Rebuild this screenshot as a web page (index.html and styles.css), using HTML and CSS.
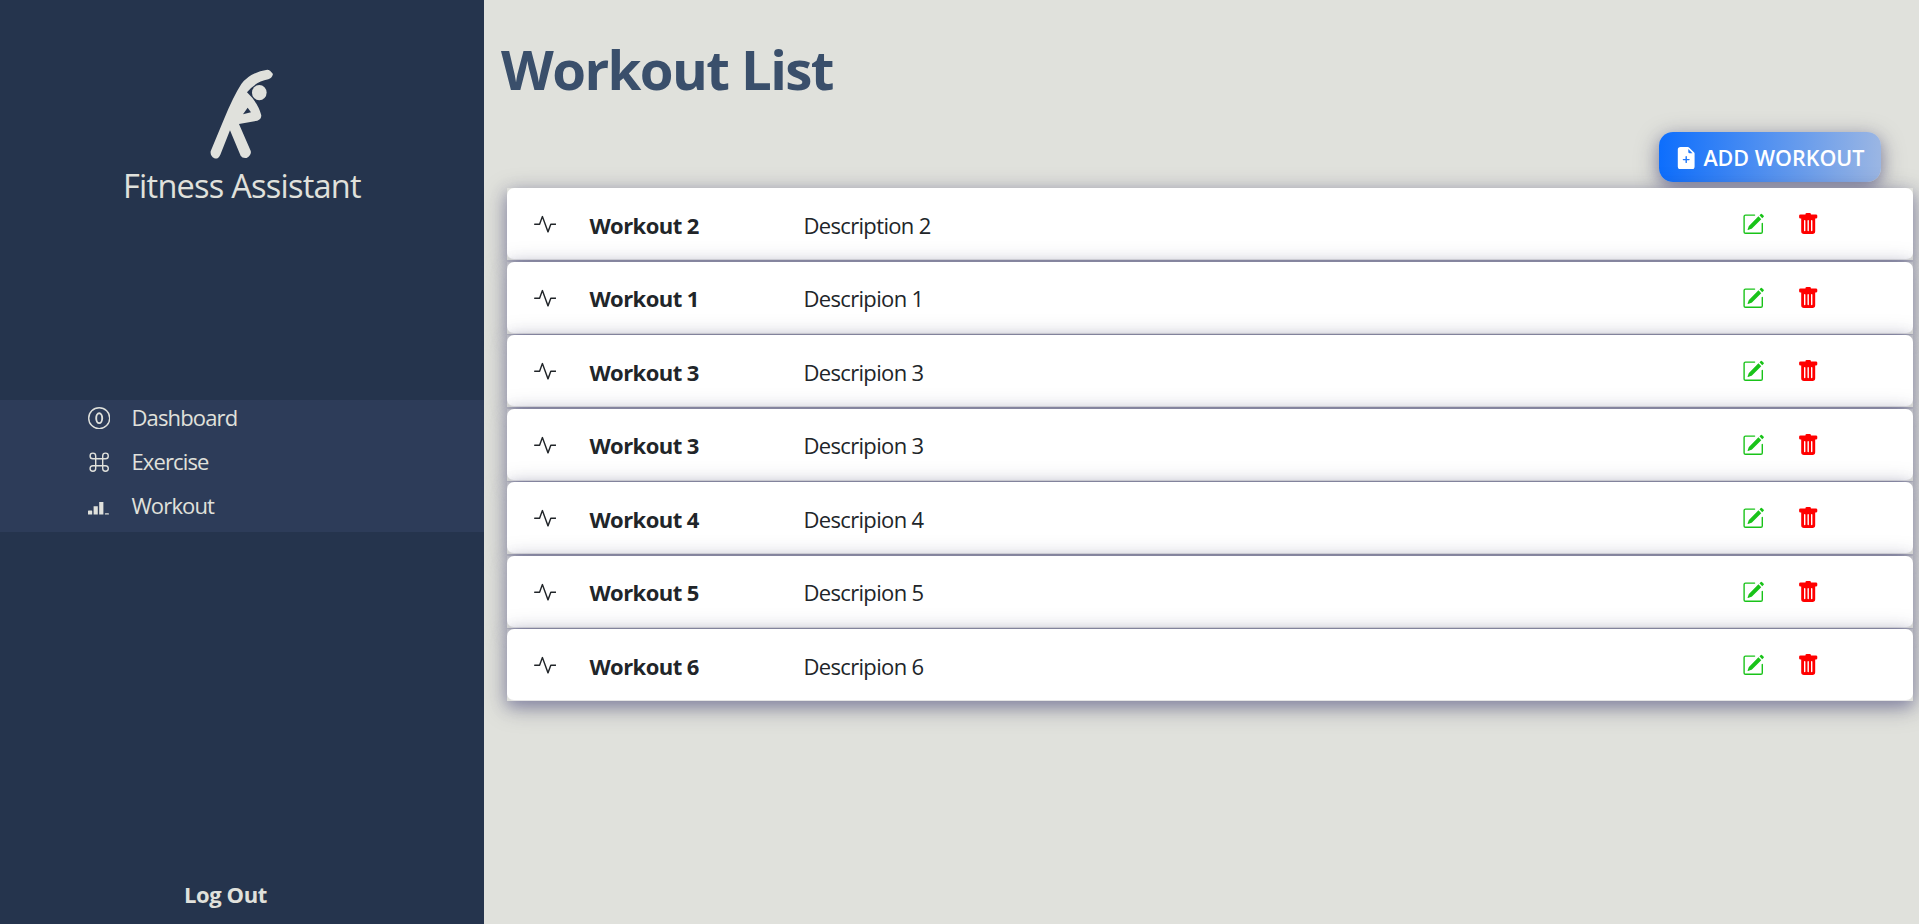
FILE: index.html
```html
<!DOCTYPE html>
<html lang="en">
<head>
<meta charset="utf-8">
<title>Fitness Assistant</title>
<link rel="stylesheet" href="styles.css">
</head>
<body>
<svg width="0" height="0" class="defs">
  <symbol id="activity" viewBox="0 0 16 16"><path d="M6 2a.5.5 0 0 1 .47.33L10 12.036l1.53-4.208A.5.5 0 0 1 12 7.5h3.5a.5.5 0 0 1 0 1h-3.15l-1.88 5.17a.5.5 0 0 1-.94 0L6 3.964 4.47 8.171A.5.5 0 0 1 4 8.5H.5a.5.5 0 0 1 0-1h3.15l1.88-5.17A.5.5 0 0 1 6 2Z"/></symbol>
  <symbol id="edit" viewBox="0 0 16 16"><path d="M15.502 1.94a.5.5 0 0 1 0 .706L14.459 3.69l-2-2L13.502.646a.5.5 0 0 1 .707 0l1.293 1.293zm-1.75 2.456-2-2L4.939 9.21a.5.5 0 0 0-.121.196l-.805 2.414a.25.25 0 0 0 .316.316l2.414-.805a.5.5 0 0 0 .196-.12l6.813-6.814z"/><path fill-rule="evenodd" d="M1 13.5A1.5 1.5 0 0 0 2.5 15h11a1.5 1.5 0 0 0 1.5-1.5v-6a.5.5 0 0 0-1 0v6a.5.5 0 0 1-.5.5h-11a.5.5 0 0 1-.5-.5v-11a.5.5 0 0 1 .5-.5H9a.5.5 0 0 0 0-1H2.5A1.5 1.5 0 0 0 1 2.5z"/></symbol>
  <symbol id="trash" viewBox="0 0 16 16"><path d="M2.5 1a1 1 0 0 0-1 1v1a1 1 0 0 0 1 1H3v9a2 2 0 0 0 2 2h6a2 2 0 0 0 2-2V4h.5a1 1 0 0 0 1-1V2a1 1 0 0 0-1-1H10a1 1 0 0 0-1-1H7a1 1 0 0 0-1 1zm3 4a.5.5 0 0 1 .5.5v7a.5.5 0 0 1-1 0v-7a.5.5 0 0 1 .5-.5M8 5a.5.5 0 0 1 .5.5v7a.5.5 0 0 1-1 0v-7A.5.5 0 0 1 8 5m3 .5v7a.5.5 0 0 1-1 0v-7a.5.5 0 0 1 1 0"/></symbol>
</svg>
<div class="app">
  <aside class="sidebar">
    <div class="brand">
      <svg class="logo" viewBox="330 58 190 272"><path fill-rule="evenodd" d="M502 60Q510 60 519 73Q516 86 505 89Q465 97 441 128Q475 160 484 197Q484 210 472 213L417 223L452 303Q456 316 440 325Q427 327 422 318L390 242L361 315Q354 330 343 326Q330 318 332 305L370 213Q400 140 424 103Q450 68 502 60ZM443 174L429 194L453 188Z"/><ellipse cx="478" cy="129" rx="22" ry="23"/></svg>
      <div class="brand-name">Fitness Assistant</div>
    </div>
    <nav class="menu">
      <a class="menu-item"><svg class="icon" viewBox="0 0 16 16"><circle cx="8" cy="8" r="7.5" fill="none" stroke="currentColor"/><ellipse cx="8" cy="8" rx="2.15" ry="3.5" fill="none" stroke="currentColor" stroke-width="1.35"/></svg><span>Dashboard</span></a>
      <a class="menu-item"><svg class="icon" viewBox="0 0 16 16"><path d="M3.5 2A1.5 1.5 0 0 1 5 3.5V5H3.5a1.5 1.5 0 1 1 0-3M6 5V3.5A2.5 2.5 0 1 0 3.5 6H5v4H3.5A2.5 2.5 0 1 0 6 12.5V11h4v1.5a2.5 2.5 0 1 0 2.5-2.5H11V6h1.5A2.5 2.5 0 1 0 10 3.5V5zm4 1v4H6V6zm1-1V3.5A1.5 1.5 0 1 1 12.5 5zm0 6h1.5a1.5 1.5 0 1 1-1.5 1.5zm-6 0v1.5A1.5 1.5 0 1 1 3.5 11z"/></svg><span>Exercise</span></a>
      <a class="menu-item"><svg class="icon" viewBox="0 0 16 16"><path d="M.4 11h2.2q.4 0 .4.4v2.6H0v-2.6q0-.4.4-.4zM4 8h3v6H4zM8 5h3v9H8zM12.5 13h2a.5.5 0 0 1 0 1h-2a.5.5 0 0 1 0-1"/></svg><span>Workout</span></a>
    </nav>
    <a class="logout">Log Out</a>
  </aside>
  <main class="content">
    <h1 class="title">Workout List</h1>
    <div class="toolbar">
      <button class="add"><svg class="icon" viewBox="0 0 16 16"><path d="M9.293 0H4a2 2 0 0 0-2 2v12a2 2 0 0 0 2 2h8a2 2 0 0 0 2-2V4.707A1 1 0 0 0 13.707 4L10 .293A1 1 0 0 0 9.293 0M9.5 3.5v-2l3 3h-2a1 1 0 0 1-1-1M8.5 7v1.5H10a.5.5 0 0 1 0 1H8.5V11a.5.5 0 0 1-1 0V9.5H6a.5.5 0 0 1 0-1h1.5V7a.5.5 0 0 1 1 0"/></svg><span>ADD WORKOUT</span></button>
    </div>
    <div class="list">
      <div class="row"><div class="card"><svg class="icon"><use href="#activity"/></svg><b class="name">Workout 2</b><span class="desc">Description 2</span><svg class="icon edit"><use href="#edit"/></svg><svg class="icon trash"><use href="#trash"/></svg></div></div>
      <div class="row"><div class="card"><svg class="icon"><use href="#activity"/></svg><b class="name">Workout 1</b><span class="desc">Descripion 1</span><svg class="icon edit"><use href="#edit"/></svg><svg class="icon trash"><use href="#trash"/></svg></div></div>
      <div class="row"><div class="card"><svg class="icon"><use href="#activity"/></svg><b class="name">Workout 3</b><span class="desc">Descripion 3</span><svg class="icon edit"><use href="#edit"/></svg><svg class="icon trash"><use href="#trash"/></svg></div></div>
      <div class="row"><div class="card"><svg class="icon"><use href="#activity"/></svg><b class="name">Workout 3</b><span class="desc">Descripion 3</span><svg class="icon edit"><use href="#edit"/></svg><svg class="icon trash"><use href="#trash"/></svg></div></div>
      <div class="row"><div class="card"><svg class="icon"><use href="#activity"/></svg><b class="name">Workout 4</b><span class="desc">Descripion 4</span><svg class="icon edit"><use href="#edit"/></svg><svg class="icon trash"><use href="#trash"/></svg></div></div>
      <div class="row"><div class="card"><svg class="icon"><use href="#activity"/></svg><b class="name">Workout 5</b><span class="desc">Descripion 5</span><svg class="icon edit"><use href="#edit"/></svg><svg class="icon trash"><use href="#trash"/></svg></div></div>
      <div class="row"><div class="card"><svg class="icon"><use href="#activity"/></svg><b class="name">Workout 6</b><span class="desc">Descripion 6</span><svg class="icon edit"><use href="#edit"/></svg><svg class="icon trash"><use href="#trash"/></svg></div></div>
    </div>
  </main>
</div>
</body>
</html>
```
FILE: styles.css
```css
* { box-sizing: border-box; }
body {
  margin: 0;
  height: 924px;
  overflow: hidden;
  background: #e0e1dc;
  color: #212529;
  font: 22px/34px "Open Sans", "Noto Sans", sans-serif;
  letter-spacing: -0.55px;
}
.defs { display: none; }
.icon { width: 22.4px; height: 22.4px; flex: none; fill: currentColor; }
.app { display: flex; height: 924px; }
.sidebar {
  width: 484px;
  flex: none;
  display: flex;
  flex-direction: column;
  background: #25344d;
  color: #e0e1dc;
}
.brand {
  height: 400px;
  padding-top: 69px;
  display: flex;
  flex-direction: column;
  align-items: center;
}
.logo { width: 63.3px; height: 90.7px; fill: currentColor; }
.brand-name { margin-top: 2px; font-size: 32.5px; line-height: 48px; letter-spacing: -0.75px; white-space: nowrap; }
.menu { height: 132px; background: #2d3c59; letter-spacing: -0.85px; }
.menu-item {
  height: 44px;
  padding: 0 0 8px 88px;
  display: flex;
  align-items: center;
  gap: 21px;
}
.menu-item span { padding-bottom: 2px; }
.logout { margin: auto 0 13px 184px; font-weight: 700; letter-spacing: -0.4px; }
.content { flex: 1; padding: 28.5px 6px 0 0; }
.title {
  margin: 0 0 0 17px;
  height: 103.5px;
  font-size: 54.6px;
  line-height: 80px;
  letter-spacing: -1.6px;
  color: #3a4f6b;
}
.toolbar { display: flex; justify-content: flex-end; padding-right: 32px; height: 56px; }
.add {
  width: 222px;
  height: 50px;
  padding: 2px 0 0 16px;
  display: flex;
  align-items: center;
  gap: 6px;
  border: 0;
  border-radius: 14px;
  background: linear-gradient(90deg, #0d6efd, #9bb6e3);
  color: #fff;
  font: 600 21.5px/34px "Open Sans", "Noto Sans", sans-serif;
  letter-spacing: 0;
  white-space: nowrap;
}
.add, .row { box-shadow: 0 5px 14px rgba(70, 70, 140, .36), 0 6px 24px rgba(40, 40, 70, .36); }
.list { margin-left: 23px; display: flex; flex-direction: column; gap: 1.5px; }
.row { height: 72px; }
.card {
  height: 72px;
  padding: 2px 0 0 27px;
  display: flex;
  align-items: center;
  background: #fff;
  border: 1px solid rgba(0, 0, 0, .1);
  border-width: 0 0 1px;
  border-radius: 7px;
}
.name { width: 214px; margin-left: 33px; }
.desc { flex: 1; letter-spacing: -0.65px; }
.edit { color: #19c319; margin-right: 32px; }
.trash { color: #f00; margin-right: 94px; }
```
